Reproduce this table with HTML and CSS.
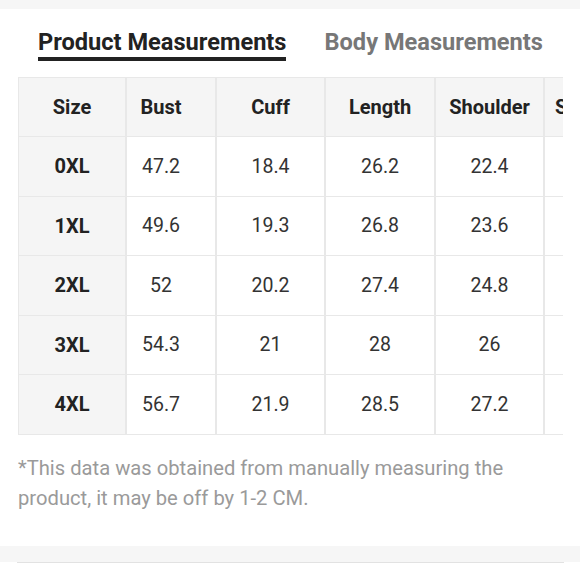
FILE: index.html
```html
<!DOCTYPE html>
<html>
<head>
<meta charset="utf-8">
<link rel="stylesheet" href="styles.css">
</head>
<body>
<div class="band band-top"></div>
<div class="content">
  <div class="tabs">
    <div class="tab active">Product Measurements</div>
    <div class="tab">Body Measurements</div>
  </div>
  <div class="table-wrap">
    <table class="sizes">
      <colgroup>
        <col class="c-size"><col class="c-bust"><col class="c-cuff"><col class="c-len"><col class="c-sh"><col class="c-sl">
      </colgroup>
      <thead>
        <tr><th class="first">Size</th><th class="bust">Bust</th><th>Cuff</th><th>Length</th><th>Shoulder</th><th>Sleeve</th></tr>
      </thead>
      <tbody>
        <tr><th class="first">0XL</th><td class="bust">47.2</td><td>18.4</td><td>26.2</td><td>22.4</td><td>24.4</td></tr>
        <tr><th class="first">1XL</th><td class="bust">49.6</td><td>19.3</td><td>26.8</td><td>23.6</td><td>24.9</td></tr>
        <tr><th class="first">2XL</th><td class="bust">52</td><td>20.2</td><td>27.4</td><td>24.8</td><td>25.4</td></tr>
        <tr><th class="first">3XL</th><td class="bust">54.3</td><td>21</td><td>28</td><td>26</td><td>25.8</td></tr>
        <tr><th class="first">4XL</th><td class="bust">56.7</td><td>21.9</td><td>28.5</td><td>27.2</td><td>26.3</td></tr>
      </tbody>
    </table>
  </div>
  <p class="note">*This data was obtained from manually measuring the product, it may be off by 1-2 CM.</p>
</div>
<div class="band band-bottom"></div>
<div class="rule"></div>
</body>
</html>
```
FILE: styles.css
```css
html, body {
  margin: 0;
  padding: 0;
  background: #ffffff;
  font-family: Roboto, "Liberation Sans", Arial, sans-serif;
}

.band {
  background: #f6f6f6;
  width: 100%;
}
.band-top { height: 9px; }
.band-bottom { height: 16px; }

.rule {
  margin: 0 16px 0 17px;
  height: 1px;
  background: #e2e2e2;
}

.content {
  padding: 20px 17px 0 18px;
  height: 537px;
  box-sizing: border-box;
}

.tabs {
  display: flex;
  gap: 38px;
  padding-left: 20px;
}

.tab {
  font-size: 23.6px;
  line-height: 26px;
  font-weight: 700;
  color: #777777;
  padding-bottom: 2px;
  border-bottom: 4px solid transparent;
  white-space: nowrap;
}

.tab.active {
  color: #222222;
  border-bottom-color: #222222;
}

.table-wrap {
  margin-top: 16px;
  width: 545px;
  overflow: hidden;
}

.sizes {
  border-collapse: separate;
  border-spacing: 0;
  table-layout: fixed;
  width: 608px;
  border-top: 1px solid #e8e8e8;
  border-left: 1px solid #e8e8e8;
}

.c-size { width: 108px; }
.c-bust { width: 90px; }
.c-cuff { width: 109px; }
.c-len { width: 110px; }
.c-sh { width: 109px; }
.c-sl { width: 82px; }

.sizes th,
.sizes td {
  border-right: 2px solid #e8e8e8;
  border-bottom: 1px solid #e8e8e8;
  text-align: center;
  padding: 0;
  font-size: 19.5px;
  height: 59.5px;
  box-sizing: border-box;
  white-space: nowrap;
}

.sizes thead th {
  background: #f5f5f5;
  font-weight: 700;
  font-size: 20px;
  color: #222222;
  height: 59px;
}

.sizes tbody th.first {
  background: #f5f5f5;
  font-weight: 700;
  font-size: 20px;
  color: #222222;
}

.sizes td {
  color: #333333;
  font-weight: 400;
}

.sizes .bust {
  padding-right: 20px;
}

.note {
  margin: 18px 0 0 0;
  font-size: 20.2px;
  line-height: 30px;
  color: #9a9a9a;
  max-width: 520px;
}
```
